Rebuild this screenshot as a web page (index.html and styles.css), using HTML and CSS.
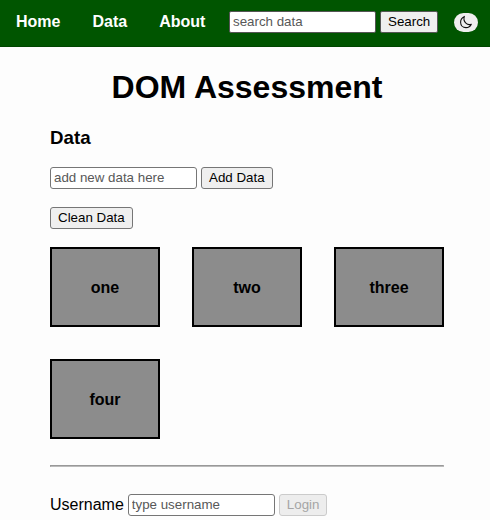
FILE: index.html
```html
<!DOCTYPE html>
<html lang="en">
<head>
<meta charset="utf-8">
<title>DOM Assessment</title>
<link rel="stylesheet" href="styles.css">
</head>
<body>
<header class="bar">
  <nav class="links"><a>Home</a><a>Data</a><a>About</a></nav>
  <form class="row search">
    <input class="field" type="text" placeholder="search data">
    <button class="btn" type="button">Search</button>
  </form>
  <button class="theme" type="button" aria-label="Theme">
    <svg viewBox="0 0 14 14" width="14" height="14"><path d="M5.4 1.4C3.3 2.4 1.6 4.6 1.6 7.2C1.6 10.3 3.9 12.6 7 12.6C9.4 12.6 11.4 11.2 12.3 9.2C10.5 10 8.4 9.6 6.9 8.1C5 6.3 4.5 3.7 5.4 1.4Z"/></svg>
  </button>
</header>
<main class="content">
  <h1>DOM Assessment</h1>
  <h2>Data</h2>
  <form class="row add">
    <input class="field" type="text" placeholder="add new data here">
    <button class="btn" type="button">Add Data</button>
  </form>
  <button class="btn clean" type="button">Clean Data</button>
  <section class="cards">
    <div class="card">one</div>
    <div class="card">two</div>
    <div class="card">three</div>
    <div class="card">four</div>
  </section>
  <hr>
  <form class="row login">
    <label for="user">Username</label>
    <input class="field" id="user" type="text" placeholder="type username">
    <button class="btn" type="button" disabled>Login</button>
  </form>
</main>
</body>
</html>
```
FILE: styles.css
```css
* { box-sizing: border-box; }
body {
  margin: 0;
  height: 520px;
  overflow: hidden;
  background: #fdfdfd;
  color: #000;
  font: 16px/18px "Liberation Sans", Arial, sans-serif;
}
.bar {
  display: flex;
  align-items: center;
  height: 47px;
  padding: 0 12px 3px 16px;
  background: #005500;
  border-bottom: 1px solid #004600;
}
.links { display: flex; gap: 32px; width: 213px; color: #fff; font-weight: 700; }
.row { display: flex; align-items: center; gap: 4px; margin: 0; }
.field, .btn {
  height: 22px;
  margin: 0;
  border: 1px solid #767676;
  border-radius: 3px;
  font: 13.333px/18px "Liberation Sans", Arial, sans-serif;
}
.field { width: 147px; padding: 1px 3px 2px; background: #fff; }
.field::placeholder { color: #585858; opacity: 1; }
.btn { padding: 0 7px; background: #efefef; color: #000; white-space: nowrap; }
.btn:disabled { color: #a5a5a5; border-color: #cbcbcb; background: #ededed; }
.search .field, .search .btn { border-color: #555; border-radius: 2px; }
.search .field { padding-bottom: 1px; }
.search .btn { padding: 0 7px; }
.theme {
  display: flex;
  align-items: center;
  justify-content: center;
  width: 24px;
  height: 19px;
  margin: 1px 0 0 auto;
  padding: 0;
  border: 0;
  border-radius: 10px;
  background: #efefef;
}
.theme path { fill: none; stroke: #111; stroke-width: 1.1; stroke-linejoin: round; }
.content { width: 394px; margin-left: 50px; }
h1 { margin: 22px 0 0; font-size: 32px; line-height: 37px; text-align: center; }
h2 { margin: 21px 0 0; font-size: 18.72px; line-height: 22px; }
.add { margin-top: 18px; }
.clean { display: block; margin-top: 18px; padding: 0 7px; }
.cards {
  display: grid;
  grid-template-columns: repeat(3, 110px);
  justify-content: space-between;
  gap: 32px 0;
  margin-top: 18px;
}
.card {
  display: flex;
  align-items: center;
  justify-content: center;
  height: 80px;
  padding-top: 1px;
  border: 2px solid #000;
  background: #8c8c8c;
  font-weight: 700;
}
hr { height: 2px; margin: 26px 0 27px; border: 1px solid; border-color: #999 #bbb #bbb #999; }
.login label { margin-top: -1px; }
```
